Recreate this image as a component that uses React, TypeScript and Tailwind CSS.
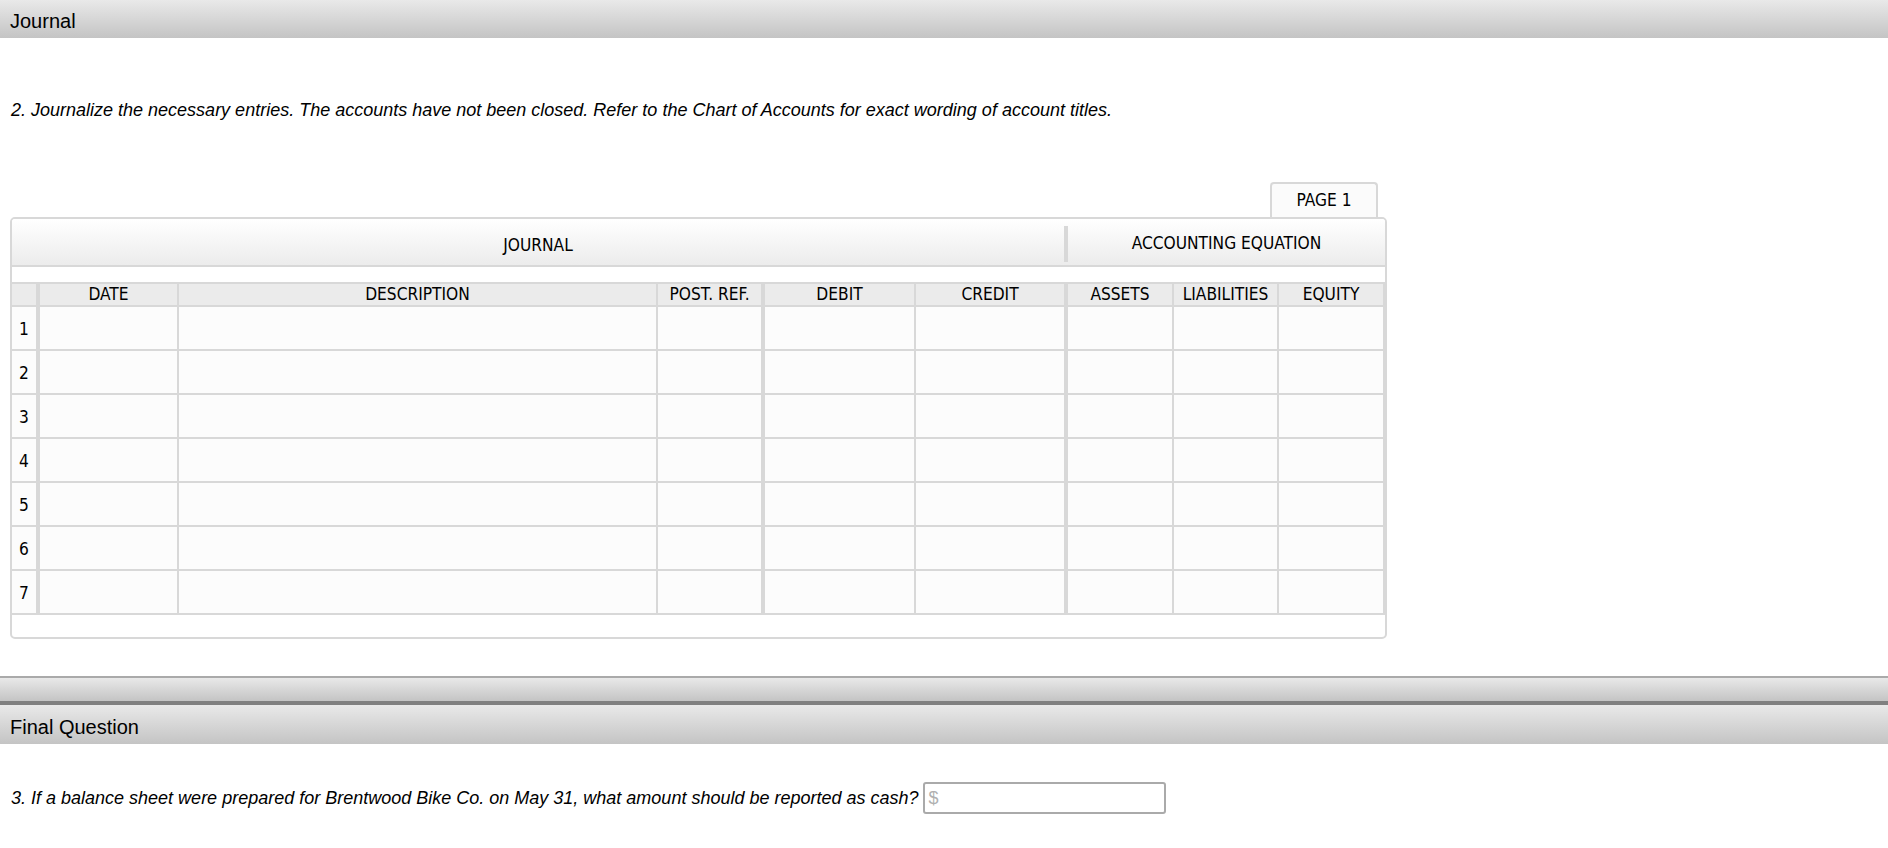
const cols = [
  { label: "", w: "w-[28px]", b: "border-r-4" },
  { label: "DATE", w: "w-[139px]", b: "border-r-2" },
  { label: "DESCRIPTION", w: "w-[479px]", b: "border-r-2" },
  { label: "POST. REF.", w: "w-[107px]", b: "border-r-4" },
  { label: "DEBIT", w: "w-[151px]", b: "border-r-2" },
  { label: "CREDIT", w: "w-[152px]", b: "border-r-4" },
  { label: "ASSETS", w: "w-[106px]", b: "border-r-2" },
  { label: "LIABILITIES", w: "w-[105px]", b: "border-r-2" },
  { label: "EQUITY", w: "w-[106px]", b: "border-r-2" },
];
const rows = [1, 2, 3, 4, 5, 6, 7];
const sans = "font-['Liberation_Sans',Arial,sans-serif]";
const tableFont = "font-['DejaVu_Sans',sans-serif] [font-stretch:condensed]";

export default function App() {
  return (
    <div className={`min-h-[848px] bg-white ${sans}`}>
      <div className="h-[38px] bg-gradient-to-b from-[#e9e9e9] to-[#c4c4c4] pl-[10px] text-[20px] leading-[42px] text-black">
        Journal
      </div>
      <p className="pt-[60px] pl-[11px] text-[18px] leading-[24px] italic text-black">
        2. Journalize the necessary entries. The accounts have not been closed. Refer to the Chart of Accounts for exact wording of account titles.
      </p>

      <div className={`ml-[10px] mt-[60px] w-[1377px] ${tableFont}`}>
        <div className="flex justify-end pr-[9px]">
          <div className="flex h-[35px] w-[108px] items-center justify-center rounded-t-[4px] border-2 border-b-0 border-[#d8d8d8] bg-[#fbfbfb] text-[17.2px] text-black">
            PAGE 1
          </div>
        </div>
        <div className="rounded-[5px] border-2 border-[#d8d8d8] bg-white">
          <div className="flex h-[48px] rounded-t-[3px] border-b-2 border-[#d8d8d8] bg-gradient-to-b from-white to-[#ececec] text-[17.2px] text-black">
            <div className="flex w-[1052px] items-center justify-center pt-[8px]">JOURNAL</div>
            <div className="mt-[7px] mb-[3px] w-[4px] bg-[#d8d8d8]" />
            <div className="flex flex-1 items-center justify-center pt-[4px]">ACCOUNTING EQUATION</div>
          </div>
          <div className="h-[15px]" />
          <div className="flex h-[25px] border-y-2 border-[#d8d8d8] bg-[#ebebeb] text-[17.2px] text-black">
            {cols.map((c) => (
              <div key={c.label} className={`${c.w} ${c.b} flex shrink-0 items-center justify-center border-[#d8d8d8]`}>
                {c.label}
              </div>
            ))}
          </div>
          {rows.map((r) => (
            <div key={r} className="flex h-[44px] border-b-2 border-[#d8d8d8] bg-[#fcfcfc] text-[17.2px] text-black">
              {cols.map((c, i) => (
                <div key={c.label} className={`${c.w} ${c.b} flex shrink-0 items-center justify-center border-[#d8d8d8] ${i === 0 ? "pt-[4px]" : ""}`}>
                  {i === 0 ? r : ""}
                </div>
              ))}
            </div>
          ))}
          <div className="h-[22px]" />
        </div>
      </div>

      <div className="mt-[37px] h-[25px] border-t-2 border-[#aaaaaa] bg-gradient-to-b from-[#e9e9e9] to-[#c4c4c4]" />
      <div className="h-[4px] bg-[#808080]" />
      <div className="h-[39px] bg-gradient-to-b from-[#e9e9e9] to-[#c4c4c4] pl-[10px] text-[20px] leading-[44px] text-black">
        Final Question
      </div>
      <div className="flex items-center pt-[38px] pl-[11px]">
        <span className="text-[18px] italic text-black">
          3. If a balance sheet were prepared for Brentwood Bike Co. on May 31, what amount should be reported as cash?
        </span>
        <div className="ml-[4px] flex h-[32px] w-[243px] items-center rounded-[3px] border-2 border-[#aaaaaa] pl-[4px] text-[18px] text-[#b0b0b0]">
          $
        </div>
      </div>
    </div>
  );
}
